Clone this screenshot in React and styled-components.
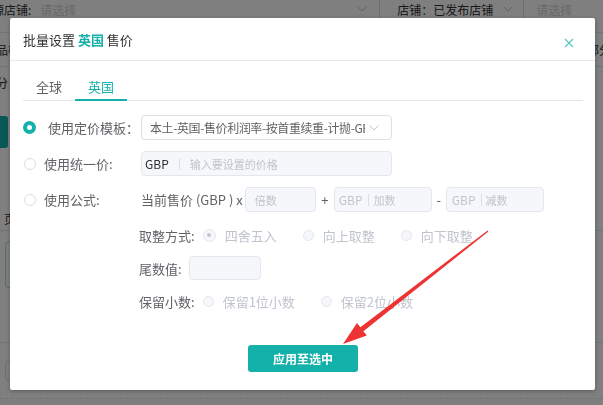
import React from "react";
import styled, { createGlobalStyle } from "styled-components";

const TEAL = "#14b1ab";
const TEXT = "#303133";
const LABEL = "#606266";
const MUTED = "#c0c4cc";

const GlobalStyle = createGlobalStyle`
  * { box-sizing: border-box; }
  html, body {
    margin: 0;
    padding: 0;
    width: 603px;
    height: 405px;
    overflow: hidden;
    background: #fff;
  }
  body {
    font-family: "Noto Sans CJK SC", "Noto Sans", sans-serif;
    color: ${TEXT};
  }
`;

/* ---------- page behind the dialog ---------- */

const Page = styled.div`
  width: 603px;
  height: 405px;
  overflow: hidden;
  background: #fff;
  font-size: 12px;
  color: ${TEXT};
`;

const FilterBar = styled.div`
  height: 18px;
  display: flex;
  align-items: center;
  white-space: nowrap;
`;

const FilterLabel = styled.span`
  flex: none;
  margin-left: -8px;
`;

const FilterSelect = styled.div`
  flex: none;
  width: ${(p) => p.$w}px;
  height: 100%;
  display: flex;
  align-items: center;
  padding: 0 12px 0 ${(p) => p.$pl}px;
  border-right: ${(p) => (p.$divider ? "1px solid #dcdfe6" : "none")};
`;

const FilterValue = styled.span`
  flex: ${(p) => (p.$grow ? 1 : "none")};
  color: ${(p) => (p.$placeholder ? "#cfcfcf" : TEXT)};
`;

const TableRow = styled.div`
  height: ${(p) => p.$h}px;
  display: flex;
  flex-direction: column;
  align-items: flex-start;
  padding-top: ${(p) => p.$pt || 0}px;
  border-bottom: 1px ${(p) => (p.$dashed ? "dashed" : "solid")} #e4e7ed;
`;

const RowLine = styled.div`
  width: 100%;
  display: flex;
  justify-content: space-between;
  align-items: center;
`;

const EdgeText = styled.span`
  line-height: 16px;
  white-space: nowrap;
  margin-left: ${(p) => p.$ml || 0}px;
  margin-right: ${(p) => p.$mr || 0}px;
  margin-top: ${(p) => p.$mt || 0}px;
`;

const EdgeButton = styled.div`
  width: 60px;
  height: 32px;
  margin-top: ${(p) => p.$mt}px;
  margin-left: -52px;
  border-radius: 3px;
  background: ${TEAL};
`;

const EdgeBox = styled.div`
  width: 80px;
  height: ${(p) => p.$h}px;
  margin-top: ${(p) => p.$mt}px;
  margin-left: 5px;
  border-radius: 4px;
  border: 1px solid ${(p) => p.$border};
`;

/* ---------- dialog ---------- */

const Overlay = styled.div`
  position: fixed;
  inset: 0;
  background: rgba(0, 0, 0, 0.5);
`;

const Dialog = styled.div`
  position: fixed;
  left: 10px;
  top: 18px;
  width: 585px;
  background: #fff;
  border-radius: 2px;
  box-shadow: 0 1px 4px rgba(0, 0, 0, 0.3);
  display: flex;
  flex-direction: column;
`;

const Header = styled.div`
  height: 43px;
  display: flex;
  align-items: center;
  justify-content: space-between;
  padding: 0 21px 0 13px;
  border-bottom: 1px solid #e8e8e8;
`;

const Title = styled.div`
  font-size: 13px;
  color: ${TEXT};
  white-space: pre;
`;

const TitleAccent = styled.span`
  color: ${TEAL};
  font-weight: 700;
`;

const CloseButton = styled.button`
  width: 10px;
  height: 10px;
  margin-top: 7px;
  padding: 0;
  border: 0;
  background: none;
  display: flex;
  cursor: pointer;
`;

const Body = styled.div`
  display: flex;
  flex-direction: column;
  padding: 13px 12px 18px 13px;
`;

const Tabs = styled.div`
  display: flex;
  height: 27px;
  border-bottom: 1px solid #e4e7ed;
`;

const Tab = styled.div`
  height: 27px;
  margin-bottom: -1px;
  padding: 0 13px;
  line-height: 25px;
  font-size: 13px;
  color: ${(p) => (p.$active ? TEAL : LABEL)};
  border-bottom: 2px solid ${(p) => (p.$active ? TEAL : "transparent")};
`;

const Form = styled.div`
  margin-top: 14px;
  display: flex;
  flex-direction: column;
  gap: 11px;
`;

const Row = styled.div`
  height: 25px;
  display: flex;
  align-items: center;
`;

const LabelCell = styled.div`
  flex: none;
  width: 118px;
  display: flex;
  align-items: center;
`;

const Radio = styled.span`
  flex: none;
  display: inline-flex;
  align-items: center;
  justify-content: center;
  width: ${(p) => (p.$checked ? 13 : p.$disabled ? 11 : 12)}px;
  height: ${(p) => (p.$checked ? 13 : p.$disabled ? 11 : 12)}px;
  margin-left: ${(p) => (p.$checked || p.$disabled ? 0 : 1)}px;
  border-radius: 50%;
  background: ${(p) => (p.$disabled ? "#f5f7fa" : "#fff")};
  border: ${(p) =>
    p.$checked && !p.$disabled
      ? `4px solid ${TEAL}`
      : `1px solid ${p.$disabled ? "#e4e7ed" : "#dcdfe6"}`};

  &::after {
    content: "";
    display: ${(p) => (p.$disabled && p.$checked ? "block" : "none")};
    width: 4px;
    height: 4px;
    border-radius: 50%;
    background: ${MUTED};
  }
`;

const OptionLabel = styled.span`
  margin-left: ${(p) => p.$ml}px;
  font-size: 13px;
  color: ${LABEL};
  white-space: nowrap;
`;

const Select = styled.div`
  flex: none;
  width: 251px;
  height: 25px;
  display: flex;
  align-items: center;
  padding: 0 12px 0 8px;
  border: 1px solid #dcdfe6;
  border-radius: 4px;
  background: #fff;
`;

const SelectText = styled.span`
  flex: 1;
  min-width: 0;
  overflow: hidden;
  white-space: nowrap;
  font-size: 12px;
  letter-spacing: -0.4px;
  color: ${LABEL};
`;

const InputGroup = styled.div`
  flex: none;
  width: ${(p) => p.$w}px;
  height: 25px;
  display: flex;
  align-items: center;
  padding-left: ${(p) => p.$pl}px;
  border: 1px solid #e4e7ed;
  border-radius: 4px;
  background: #f5f7fa;
  white-space: nowrap;
`;

const Prefix = styled.span`
  font-size: 12px;
  color: ${(p) => (p.$muted ? MUTED : TEXT)};
`;

const Divider = styled.span`
  width: 1px;
  height: 12px;
  margin: 0 ${(p) => p.$after}px 0 ${(p) => p.$before}px;
  background: #dcdfe6;
`;

const Placeholder = styled.span`
  font-size: 11px;
  color: ${MUTED};
`;

const FormulaText = styled.span`
  flex: none;
  font-size: 13px;
  color: ${LABEL};
  white-space: pre;
  margin-right: 2px;
`;

const Operator = styled.span`
  flex: none;
  width: ${(p) => p.$w}px;
  text-align: center;
  font-size: 13px;
  color: ${LABEL};
`;

const SubForm = styled.div`
  display: flex;
  flex-direction: column;
  gap: 9px;
  padding-left: 116px;
`;

const SubRow = styled.div`
  height: 24px;
  display: flex;
  align-items: center;
`;

const SubLabel = styled.span`
  flex: none;
  font-size: 13px;
  color: ${LABEL};
  margin-right: 8px;
`;

const Choice = styled.span`
  display: inline-flex;
  align-items: center;
  margin-right: 26px;
`;

const ChoiceText = styled.span`
  margin-left: 9px;
  font-size: 13px;
  color: ${MUTED};
`;

const SmallInput = styled.div`
  width: 72px;
  height: 24px;
  margin-left: -1px;
  border: 1px solid #e4e7ed;
  border-radius: 4px;
  background: #f5f7fa;
`;

const Footer = styled.div`
  margin-top: 32px;
  display: flex;
  justify-content: center;
`;

const PrimaryButton = styled.button`
  width: 110px;
  height: 27px;
  border: 0;
  border-radius: 3px;
  background: ${TEAL};
  color: #fff;
  font-family: inherit;
  font-size: 12px;
  font-weight: 600;
  cursor: pointer;
`;

const Annotation = styled.svg`
  position: fixed;
  inset: 0;
  pointer-events: none;
`;

const Chevron = ({ color = MUTED, ml = 0 }) => (
  <svg width="10" height="6" viewBox="0 0 10 6" style={{ marginLeft: ml, flex: "none" }}>
    <polyline points="0.5,0.5 5,5 9.5,0.5" fill="none" stroke={color} strokeWidth="1" />
  </svg>
);

const Choices = ({ items, checkedIndex }) =>
  items.map((text, i) => (
    <Choice key={text}>
      <Radio $disabled $checked={i === checkedIndex} />
      <ChoiceText>{text}</ChoiceText>
    </Choice>
  ));

export default function App() {
  return (
    <>
      <GlobalStyle />
      <Page>
        <FilterBar>
          <FilterLabel>源店铺:</FilterLabel>
          <FilterSelect $w={349} $pl={9} $divider>
            <FilterValue $placeholder $grow>请选择</FilterValue>
            <Chevron color="#c0c4cc" />
          </FilterSelect>
          <FilterSelect $w={144} $pl={17} $divider>
            <FilterValue>店铺：已发布店铺</FilterValue>
            <Chevron color="#c0c4cc" ml={10} />
          </FilterSelect>
          <FilterSelect $w={80} $pl={12}>
            <FilterValue $placeholder>请选择</FilterValue>
          </FilterSelect>
        </FilterBar>
        <TableRow $h={15} />
        <TableRow $h={34}>
          <RowLine style={{ height: 33 }}>
            <EdgeText $ml={-16}>商品检</EdgeText>
            <EdgeText $mr={-8}>部分</EdgeText>
          </RowLine>
        </TableRow>
        <TableRow $h={164} $pt={8}>
          <EdgeText $ml={-16}>部分</EdgeText>
          <EdgeButton $mt={25} />
          <EdgeText $ml={4} $mt={63}>页</EdgeText>
        </TableRow>
        <TableRow $h={112}>
          <EdgeBox $mt={10} $h={47} $border="#a9d9d6" />
        </TableRow>
        <TableRow $h={56} $dashed>
          <EdgeBox $mt={18} $h={20} $border="#dcdfe6" />
        </TableRow>
      </Page>

      <Overlay />

      <Dialog>
        <Header>
          <Title>
            批量设置 <TitleAccent>英国</TitleAccent> 售价
          </Title>
          <CloseButton aria-label="关闭">
            <svg width="10" height="10" viewBox="0 0 10 10">
              <path d="M1 1 L9 9 M9 1 L1 9" stroke="#5cc6c1" strokeWidth="1.2" fill="none" />
            </svg>
          </CloseButton>
        </Header>

        <Body>
          <Tabs>
            <Tab>全球</Tab>
            <Tab $active>英国</Tab>
          </Tabs>

          <Form>
            <Row>
              <LabelCell>
                <Radio $checked />
                <OptionLabel $ml={12}>使用定价模板：</OptionLabel>
              </LabelCell>
              <Select>
                <SelectText>本土-英国-售价利润率-按首重续重-计抛-GBP</SelectText>
                <Chevron ml={4} />
              </Select>
            </Row>

            <Row>
              <LabelCell>
                <Radio />
                <OptionLabel $ml={8}>使用统一价:</OptionLabel>
              </LabelCell>
              <InputGroup $w={251} $pl={3}>
                <Prefix>GBP</Prefix>
                <Divider $before={10} $after={10} />
                <Placeholder>输入要设置的价格</Placeholder>
              </InputGroup>
            </Row>

            <Row>
              <LabelCell>
                <Radio />
                <OptionLabel $ml={8}>使用公式:</OptionLabel>
              </LabelCell>
              <FormulaText>当前售价 (GBP ) x</FormulaText>
              <InputGroup $w={71} $pl={9}>
                <Placeholder>倍数</Placeholder>
              </InputGroup>
              <Operator $w={18}>+</Operator>
              <InputGroup $w={98} $pl={4}>
                <Prefix $muted>GBP</Prefix>
                <Divider $before={6} $after={4} />
                <Placeholder>加数</Placeholder>
              </InputGroup>
              <Operator $w={14}>-</Operator>
              <InputGroup $w={98} $pl={5}>
                <Prefix $muted>GBP</Prefix>
                <Divider $before={6} $after={3} />
                <Placeholder>减数</Placeholder>
              </InputGroup>
            </Row>

            <SubForm>
              <SubRow>
                <SubLabel>取整方式:</SubLabel>
                <Choices items={["四舍五入", "向上取整", "向下取整"]} checkedIndex={0} />
              </SubRow>
              <SubRow>
                <SubLabel>尾数值:</SubLabel>
                <SmallInput />
              </SubRow>
              <SubRow>
                <SubLabel>保留小数:</SubLabel>
                <Choices items={["保留1位小数", "保留2位小数"]} checkedIndex={-1} />
              </SubRow>
            </SubForm>
          </Form>

          <Footer>
            <PrimaryButton>应用至选中</PrimaryButton>
          </Footer>
        </Body>
      </Dialog>

      {/* red callout arrow pointing at the apply button */}
      <Annotation width="603" height="405" viewBox="0 0 603 405">
        <polygon
          points="488.4,231.6 363.4,331.2 366.8,335.5 343,344 357,322.9 360.4,327.2 487.6,230.4"
          fill="#ee3333"
        />
      </Annotation>
    </>
  );
}
